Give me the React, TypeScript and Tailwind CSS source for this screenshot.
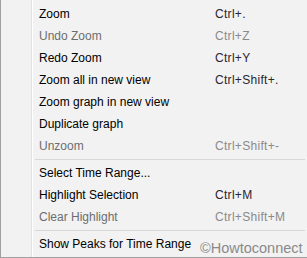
import React from "react";

type Item = { label: string; shortcut?: string; disabled?: boolean } | "sep";

const items: Item[] = [
  { label: "Zoom", shortcut: "Ctrl+." },
  { label: "Undo Zoom", shortcut: "Ctrl+Z", disabled: true },
  { label: "Redo Zoom", shortcut: "Ctrl+Y" },
  { label: "Zoom all in new view", shortcut: "Ctrl+Shift+." },
  { label: "Zoom graph in new view" },
  { label: "Duplicate graph" },
  { label: "Unzoom", shortcut: "Ctrl+Shift+-", disabled: true },
  "sep",
  { label: "Select Time Range..." },
  { label: "Highlight Selection", shortcut: "Ctrl+M" },
  { label: "Clear Highlight", shortcut: "Ctrl+Shift+M", disabled: true },
  "sep",
  { label: "Show Peaks for Time Range" },
];

export default function App() {
  return (
    <div
      className="relative w-[307px] h-[258px] bg-[#f2f2f2] border-l border-b border-[#a0a0a0] overflow-hidden"
      style={{ fontFamily: '"Liberation Sans", Arial, sans-serif' }}
    >
      <div className="absolute left-[30px] top-0 bottom-0 w-px bg-[#e2e2e2]" />
      <div className="absolute left-[31px] top-0 bottom-0 w-px bg-white" />
      <div className="flex flex-col pt-[3px]">
        {items.map((it, i) =>
          it === "sep" ? (
            <div key={i} className="h-[5px] flex flex-col justify-center pl-[34px] pr-[2px]">
              <div className="h-px bg-[#d7d7d7]" />
            </div>
          ) : (
            <div key={i} className="h-[22px] flex items-center text-[12px] leading-none">
              <span
                className={`pl-[38px] w-[214px] whitespace-nowrap ${
                  it.disabled ? "text-[#6d6d6d]" : "text-[#000000]"
                }`}
              >
                {it.label}
              </span>
              {it.shortcut && (
                <span
                  className={`whitespace-nowrap tracking-[0.3px] ${
                    it.disabled ? "text-[#8a8a8a]" : "text-[#2a2530]"
                  }`}
                >
                  {it.shortcut}
                </span>
              )}
            </div>
          )
        )}
      </div>
      <div className="absolute left-[199px] top-[241px] text-[14.5px] leading-none text-[#8a8a8a] whitespace-nowrap">
        ©Howtoconnect
      </div>
    </div>
  );
}
